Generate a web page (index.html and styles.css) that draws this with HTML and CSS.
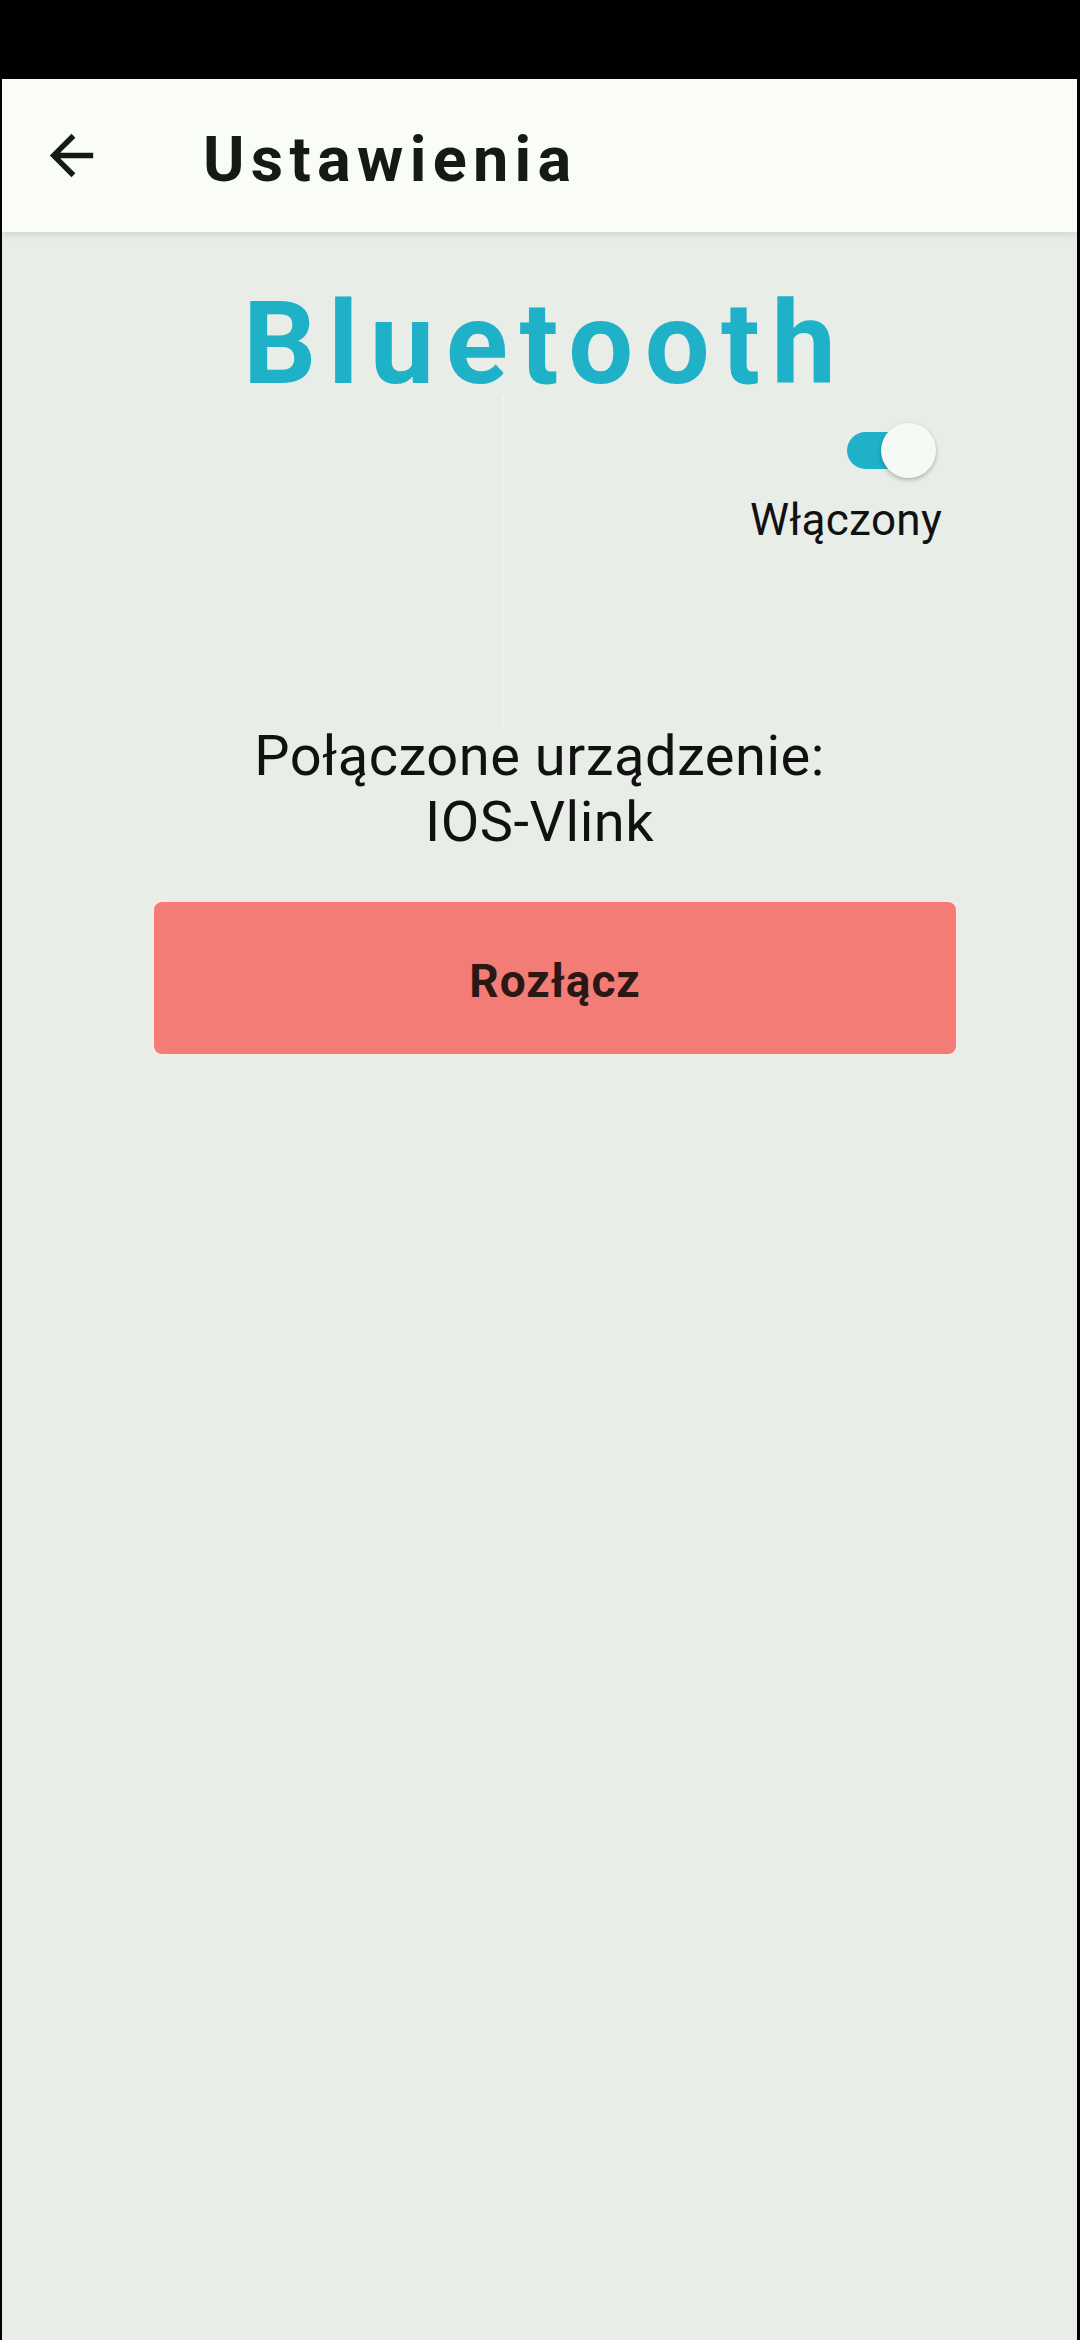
FILE: index.html
```html
<!DOCTYPE html>
<html lang="pl">
<head>
<meta charset="utf-8">
<title>Ustawienia</title>
<link rel="stylesheet" href="styles.css">
</head>
<body>
<div class="screen">
  <div class="status-bar"></div>
  <header class="app-bar">
    <button class="back" aria-label="Wstecz">
      <svg viewBox="0 0 24 24"><path d="M20 11H7.83l5.59-5.59L12 4l-8 8 8 8 1.41-1.41L7.83 13H20v-2z"/></svg>
    </button>
    <h1 class="app-title">Ustawienia</h1>
  </header>
  <main class="content">
    <h2 class="section-title">Bluetooth</h2>
    <div class="toggle-group">
      <div class="switch"><span class="track"></span><span class="thumb"></span></div>
      <span class="toggle-label">Włączony</span>
    </div>
    <p class="device">Połączone urządzenie:<br>IOS-Vlink</p>
    <button class="disconnect">Rozłącz</button>
  </main>
</div>
</body>
</html>
```

FILE: styles.css
```css
* { box-sizing: border-box; }
html, body { margin: 0; padding: 0; background: #000; }
body { font-family: Roboto, "Noto Sans", "Liberation Sans", sans-serif; }

.screen {
  width: 1080px;
  height: 2340px;
  border-left: 2px solid #000;
  border-right: 3px solid #000;
  background: #e8ede7;
  display: flex;
  flex-direction: column;
  overflow: hidden;
}

.status-bar { height: 79px; background: #000; flex: none; }

.app-bar {
  height: 153px;
  flex: none;
  background: #fafdf7;
  display: flex;
  align-items: center;
  box-shadow: 0 3px 7px rgba(0, 0, 0, 0.10);
  position: relative;
  z-index: 1;
}

.back {
  width: 65px;
  height: 65px;
  margin-left: 37px;
  padding: 0;
  border: 0;
  background: none;
  display: flex;
}
.back svg { width: 65px; height: 65px; fill: #161a16; }

.app-title {
  margin: 0 0 0 99px;
  padding-top: 8px;
  font-size: 63px;
  font-weight: 700;
  letter-spacing: 0.1em;
  color: #161a14;
}

.content {
  flex: 1;
  display: flex;
  flex-direction: column;
  position: relative;
}
.content::before {
  content: "";
  position: absolute;
  left: 500px;
  top: 163px;
  width: 2px;
  height: 335px;
  background: rgba(255, 255, 255, 0.3);
}

.section-title {
  margin: 44px 0 0;
  text-align: center;
  font-size: 115px;
  font-weight: 700;
  letter-spacing: 0.1em;
  text-indent: 0.1em;
  color: #1eb1c8;
  line-height: normal;
}

.toggle-group {
  margin-top: 12px;
  padding-right: 135px;
  display: flex;
  flex-direction: column;
  align-items: flex-end;
}

.switch {
  display: flex;
  align-items: center;
  margin-right: 6px;
  height: 55px;
}
.track {
  width: 80px;
  height: 37px;
  border-radius: 19px;
  background: #1eb1c8;
}
.thumb {
  width: 55px;
  height: 55px;
  margin-left: -46px;
  border-radius: 50%;
  background: #f5faf5;
  box-shadow: 0 2px 4px rgba(0, 0, 0, 0.25);
}

.toggle-label {
  margin-top: 16px;
  font-size: 44px;
  letter-spacing: 0.3px;
  color: #111;
}

.device {
  margin: 177px 0 0;
  text-align: center;
  font-size: 56px;
  letter-spacing: 0.5px;
  line-height: 66px;
  color: #111;
}

.disconnect {
  margin: 45px 119px 0 150px;
  height: 156px;
  padding: 6px 0 0;
  border: 2px solid #fbe9e4;
  border-radius: 10px;
  background: #f37c77;
  font-family: Roboto, "Noto Sans", "Liberation Sans", sans-serif;
  font-size: 46px;
  letter-spacing: 1px;
  font-weight: 700;
  color: #2b1714;
}
```
